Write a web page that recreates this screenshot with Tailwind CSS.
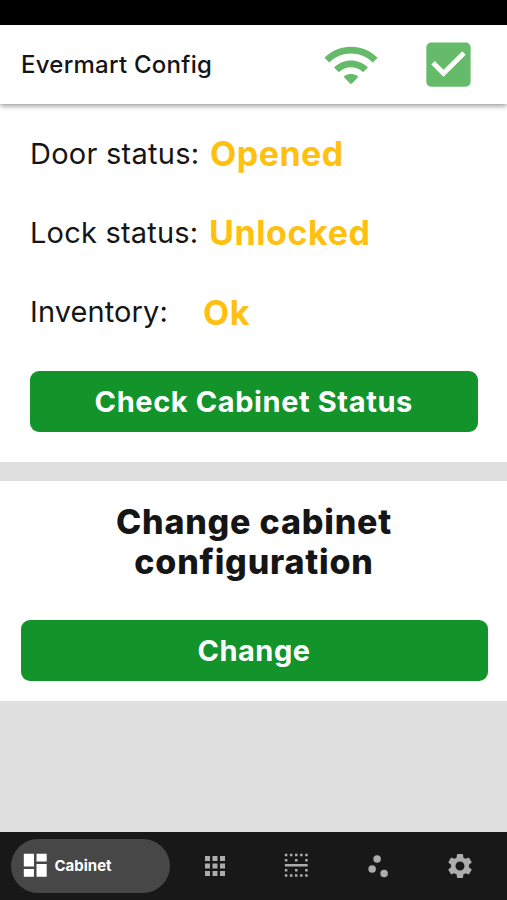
<!DOCTYPE html>
<html lang="en">
<head>
<meta charset="utf-8">
<title>Evermart Config</title>
<script src="https://cdn.jsdelivr.net/npm/@tailwindcss/browser@4"></script>
</head>
<body class="w-[507px] h-[900px] overflow-hidden bg-[#dfdfdf] font-['Inter',sans-serif] text-[#151515] flex flex-col">
  <div class="h-[25px] bg-black shrink-0"></div>
  <header class="relative z-10 h-[79px] shrink-0 bg-white flex items-center pl-[21px] pr-[29.5px] shadow-[0_2px_5px_rgba(0,0,0,0.4)]">
    <h1 class="text-[24px] font-medium tracking-[0.25px] flex-1 whitespace-nowrap">Evermart Config</h1>
    <svg class="size-[58px] mr-[39px]" viewBox="0 0 24 24" fill="#66bb6a"><path d="M1 9l2 2c4.97-4.97 13.03-4.97 18 0l2-2C16.93 2.93 7.08 2.93 1 9zm8.3 8.3l2.2 2.2q.5.5 1 0l2.2-2.2q.5-.5-.1-.9c-1.6-.9-3.6-.9-5.2 0q-.6.4-.1.9zM5 13l2 2c2.76-2.76 7.24-2.76 10 0l2-2C15.14 9.14 8.87 9.14 5 13z"/></svg>
    <svg class="size-[59px]" viewBox="0 0 24 24" fill="#66bb6a"><path d="M19 3H5c-1.11 0-2 .9-2 2v14c0 1.1.89 2 2 2h14c1.11 0 2-.9 2-2V5c0-1.1-.89-2-2-2zm-9 14l-5-5 1.41-1.41L10 14.17l7.59-7.59L19 8l-9 9z"/></svg>
  </header>
  <section class="h-[357.5px] shrink-0 bg-white pl-[30px] pr-[29.5px] pt-[10px]">
    <div class="h-[79px] flex items-center whitespace-nowrap"><span class="text-[29px] tracking-[0.25px] w-[180px]">Door status:</span><span class="text-[34px] font-bold tracking-[0.5px] text-[#ffc010]">Opened</span></div>
    <div class="h-[79.5px] flex items-center whitespace-nowrap"><span class="text-[29px] tracking-[0.2px] w-[179px]">Lock status:</span><span class="text-[34px] font-bold tracking-[0.6px] text-[#ffc010]">Unlocked</span></div>
    <div class="h-[79px] flex items-center whitespace-nowrap"><span class="text-[29px] tracking-[0.1px] w-[173px]">Inventory:</span><span class="text-[34px] font-bold tracking-[0.5px] text-[#ffc010]">Ok</span></div>
    <button class="mt-[19px] w-full h-[61px] rounded-[9px] bg-[#12942b] text-white text-[29px] font-bold tracking-[0.6px] block pt-px">Check Cabinet Status</button>
  </section>
  <section class="mt-[19.5px] h-[220px] shrink-0 bg-white pl-[20.5px] pr-[19.5px] pt-[21px]">
    <h2 class="text-center text-[34px] leading-[40px] font-extrabold tracking-[0.8px]">Change cabinet<br>configuration</h2>
    <button class="mt-[38px] w-full h-[61px] rounded-[9px] bg-[#12942b] text-white text-[29px] font-bold tracking-[0.5px] block pt-px">Change</button>
  </section>
  <nav class="mt-auto h-[68.5px] shrink-0 bg-[#181818] flex items-start pt-[7px] pl-[10.5px] text-[#acacac]">
    <div class="w-[159px] h-[54px] rounded-full bg-[#474747] text-white flex items-center pl-[9px] gap-[4.5px]">
      <svg class="size-[30.5px]" viewBox="0 0 24 24" fill="currentColor"><path d="M3 13h8V3H3v10zm0 8h8v-6H3v6zm10 0h8V11h-8v10zm0-18v6h8V3h-8z"/></svg>
      <span class="text-[15px] font-bold pt-[2px]">Cabinet</span>
    </div>
    <div class="flex h-[54px] items-center pl-[30px] gap-[51.5px]">
      <svg class="size-[30px]" viewBox="0 0 24 24" fill="currentColor"><path d="M4 8h4V4H4v4zm6 12h4v-4h-4v4zm-6 0h4v-4H4v4zm0-6h4v-4H4v4zm6 0h4v-4h-4v4zm6-10v4h4V4h-4zm-6 4h4V4h-4v4zm6 6h4v-4h-4v4zm0 6h4v-4h-4v4z"/></svg>
      <svg class="size-[30.5px]" viewBox="0 0 24 24" fill="currentColor"><path d="M3 21h2v-2H3v2zM5 7H3v2h2V7zM3 17h2v-2H3v2zm4 4h2v-2H7v2zM5 3H3v2h2V3zm4 0H7v2h2V3zm8 0h-2v2h2V3zm-4 4h-2v2h2V7zm0-4h-2v2h2V3zm6 14h2v-2h-2v2zm-8 4h2v-2h-2v2zm-8-8h18v-2H3v2zM19 3v2h2V3h-2zm0 6h2V7h-2v2zm-8 8h2v-2h-2v2zm4 4h2v-2h-2v2zm4 0h2v-2h-2v2z"/></svg>
      <svg class="size-[30px]" viewBox="0 0 24 24" fill="currentColor"><circle cx="7.3" cy="14.3" r="3"/><circle cx="11.3" cy="6.4" r="3"/><circle cx="16.9" cy="17.9" r="3"/></svg>
      <svg class="size-[30px]" viewBox="0 0 24 24" fill="currentColor"><path d="M19.14 12.94c.04-.3.06-.61.06-.94 0-.32-.02-.64-.07-.94l2.03-1.58c.18-.14.23-.41.12-.61l-1.92-3.32c-.12-.22-.37-.29-.59-.22l-2.39.96c-.5-.38-1.03-.7-1.62-.94l-.36-2.54c-.04-.24-.24-.41-.48-.41h-3.84c-.24 0-.43.17-.47.41l-.36 2.54c-.59.24-1.13.57-1.62.94l-2.39-.96c-.22-.08-.47 0-.59.22L2.74 8.87c-.12.21-.08.47.12.61l2.03 1.58c-.05.3-.09.63-.09.94s.02.64.07.94l-2.03 1.58c-.18.14-.23.41-.12.61l1.92 3.32c.12.22.37.29.59.22l2.39-.96c.5.38 1.03.7 1.62.94l.36 2.54c.05.24.24.41.48.41h3.84c.24 0 .44-.17.47-.41l.36-2.54c.59-.24 1.13-.56 1.62-.94l2.39.96c.22.08.47 0 .59-.22l1.92-3.32c.12-.22.07-.47-.12-.61l-2.01-1.58zM12 15.6c-1.98 0-3.6-1.62-3.6-3.6s1.62-3.6 3.6-3.6 3.6 1.62 3.6 3.6-1.62 3.6-3.6 3.6z"/></svg>
    </div>
  </nav>
</body>
</html>
